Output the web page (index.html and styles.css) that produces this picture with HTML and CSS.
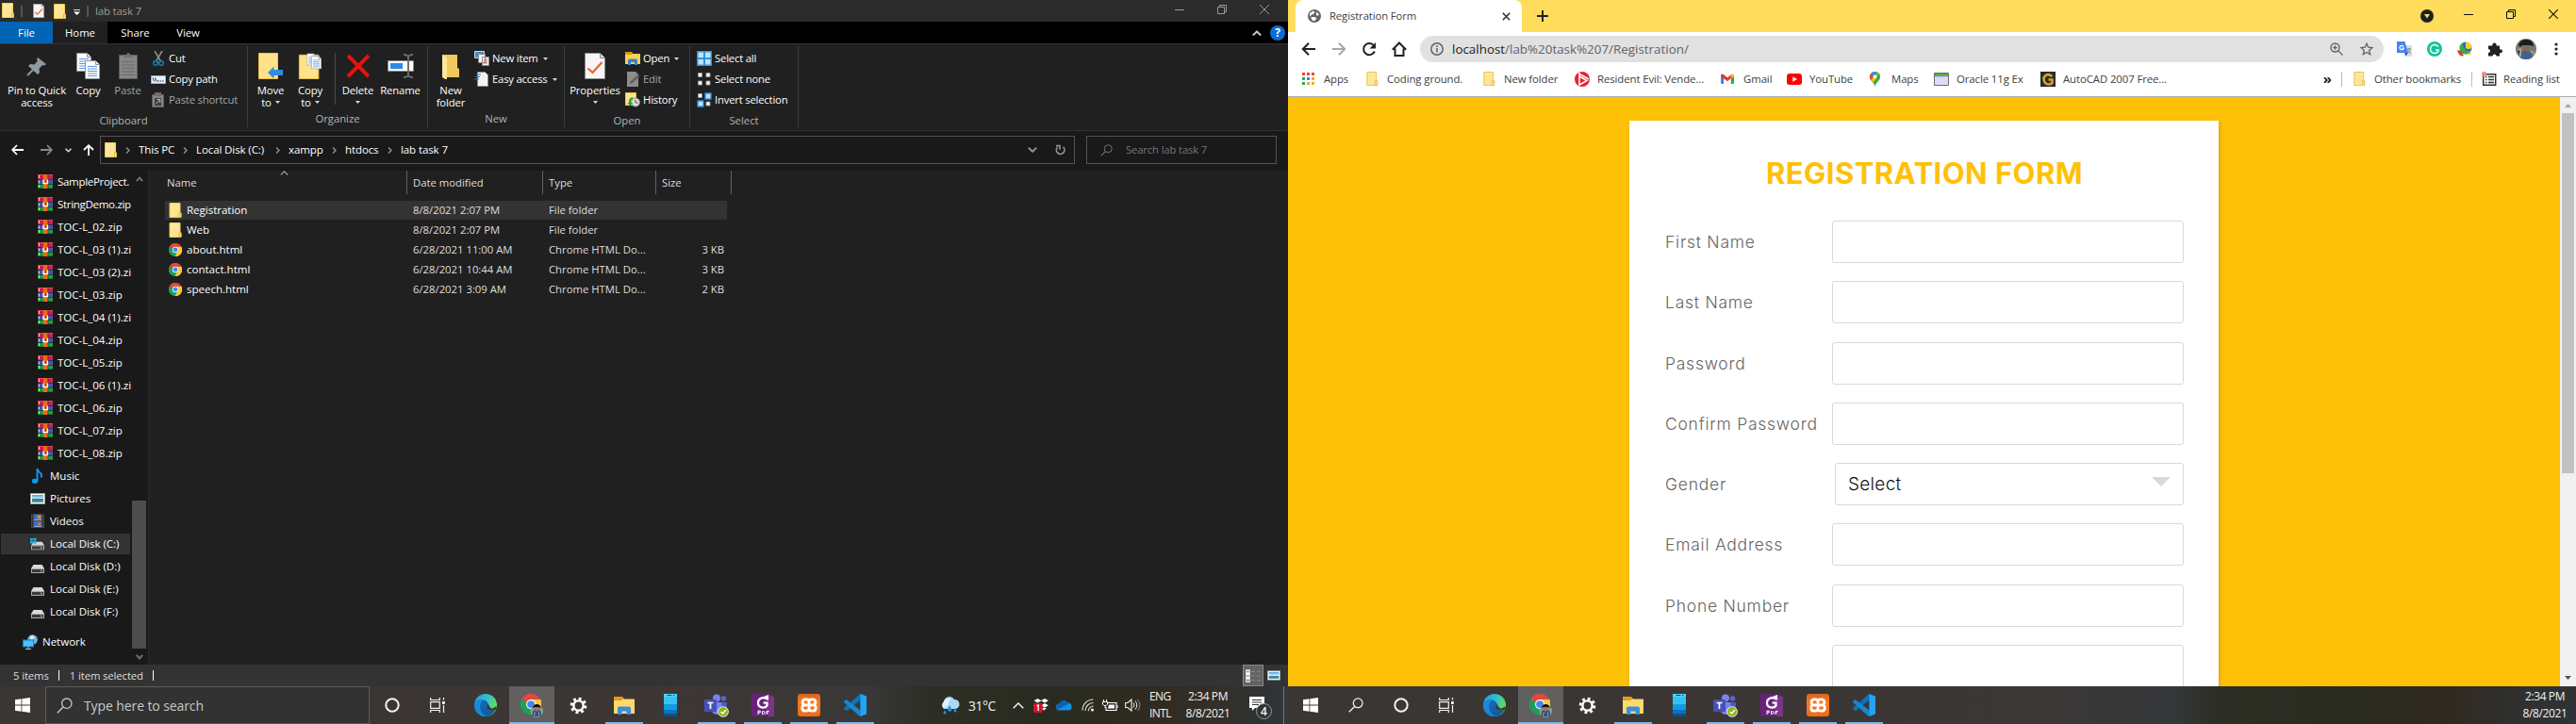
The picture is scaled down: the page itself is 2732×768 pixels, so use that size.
FILE: index.html
```
<!DOCTYPE html>
<html lang="en">
<head>
<meta charset="utf-8">
<title>Desktop</title>
<link rel="stylesheet" href="styles.css">
</head>
<body>
<svg class="defs" width="0" height="0" aria-hidden="true">
  <defs>
    <linearGradient id="gEdge" x1="0" y1="0" x2="1" y2="0.3"><stop offset="0" stop-color="#1b9de2"/><stop offset="0.6" stop-color="#35c1c9"/><stop offset="1" stop-color="#5fdc5a"/></linearGradient>
    <linearGradient id="gEdge2" x1="0" y1="0" x2="0.7" y2="1"><stop offset="0" stop-color="#1470c4"/><stop offset="1" stop-color="#0c59a4"/></linearGradient>
    <linearGradient id="gFold" x1="0" y1="0" x2="1" y2="1"><stop offset="0" stop-color="#ffe9a2"/><stop offset="1" stop-color="#ffe085"/></linearGradient>
    <linearGradient id="gSky" x1="0" y1="0" x2="0" y2="1"><stop offset="0" stop-color="#3f9be8"/><stop offset="0.5" stop-color="#d5ecf7"/><stop offset="0.55" stop-color="#3c7a6a"/><stop offset="1" stop-color="#4f9fc4"/></linearGradient>
    <linearGradient id="gOrange" x1="0" y1="0" x2="0" y2="1"><stop offset="0" stop-color="#d8651f"/><stop offset="0.4" stop-color="#ff7a22"/><stop offset="1" stop-color="#ef6a17"/></linearGradient>
  </defs>
  <symbol id="folder" viewBox="0 0 13 16"><path d="M0.5 0.5h11v10.5h1v4.5h-12z" fill="url(#gFold)" stroke="#f1cb5a"/><path d="M10.5 15.5v-4.5l2 0v4.5z" fill="#ffe591" stroke="#e3b93e"/></symbol>
  <symbol id="zip" viewBox="0 0 16 15"><rect width="16" height="5" fill="#c9224b"/><rect width="16" height="1" fill="#e2476c"/><rect y="5" width="16" height="5" fill="#4b52b4"/><rect y="5" width="16" height="1" fill="#2b2c66"/><rect y="10" width="16" height="5" fill="#20a040"/><rect y="10" width="16" height="1" fill="#124f22"/><rect y="14" width="16" height="1" fill="#13772c"/><path d="M1.5 1v3M1.5 6.500v3M1.500 11v3" stroke="#f7e04a"/><rect x="6" width="4.500" height="15" fill="#ea6a1c"/><rect x="10.500" width="1" height="15" fill="#222" opacity=".5"/><path d="M6 5.500v4h4.500v-4" fill="none" stroke="#fff" stroke-width="1.300"/><path d="M8.200 6v3" stroke="#8b3a10"/></symbol>
  <symbol id="chrome" viewBox="0 0 48 48"><path d="M24 24 3.200 12A24 24 0 0 1 44.800 12z" fill="#dd4a3e"/><path d="M24 24 44.800 12A24 24 0 0 1 24 48z" fill="#fdc83b"/><path d="M24 24 24 48A24 24 0 0 1 3.200 12z" fill="#1c9f5c"/><path d="M24 13h22a24 24 0 0 1-22 35l9.500-18z" fill="#fdc83b"/><path d="M3.200 12 14.500 30 24 35 32 31 22 48A24 24 0 0 1 3.200 12z" fill="#1c9f5c"/><path d="M3.200 12A24 24 0 0 1 45 13H24L14 20z" fill="#dd4a3e"/><circle cx="24" cy="24" r="11" fill="#fff"/><circle cx="24" cy="24" r="8.500" fill="#4688f1"/></symbol>
  <symbol id="caret" viewBox="0 0 5 3"><path d="M0 0h5L2.500 3z" fill="#d8d8d8"/></symbol>
  <symbol id="picture" viewBox="0 0 16 12"><rect width="16" height="12" fill="#9a9a9a"/><rect x="1" y="1" width="14" height="10" fill="#fff"/><rect x="2" y="2" width="12" height="8" fill="url(#gSky)"/></symbol>
  <symbol id="drive" viewBox="0 0 14 9"><path d="M2.500 0h9L14 4H0z" fill="#d9d9dc"/><rect y="4" width="14" height="5" fill="#a9a9ac"/><rect x="1" y="5" width="12" height="3" fill="#3a3a3a"/><circle cx="10.800" cy="6.500" r=".9" fill="#43e04b"/></symbol>
  <symbol id="doc" viewBox="0 0 16 20"><path d="M.5.500h11l4 4v15H.500z" fill="#fbfcff" stroke="#8f9398"/><path d="M11.500.500v4h4" fill="#e6e6ea" stroke="#8f9398"/><path d="M3 6.500h10M3 9h10M3 11.500h10M3 14h10M3 16.500h10" stroke="#5e97dc"/></symbol>
  <symbol id="checkdoc" viewBox="0 0 22 28"><path d="M.5.500h16l5 5v22H.500z" fill="#f6f6f8" stroke="#8b8b8b"/><path d="M16.500.500v5h5" fill="#ddd" stroke="#8b8b8b"/><path d="M3.500 16.500l5 4.500 10-11" fill="none" stroke="#f0621e" stroke-width="2.300"/></symbol>
  <symbol id="win" viewBox="0 0 16 16"><path d="M0 2.300 6.500 1.300V7.600H0zM7.300 1.200 16 0V7.600H7.300zM0 8.400H6.500V14.700L0 13.700zM7.300 8.400H16V16L7.300 14.800z" fill="#fff"/></symbol>
  <symbol id="lens" viewBox="0 0 17 17"><circle cx="10.800" cy="6.200" r="5.200" fill="none" stroke="currentColor" stroke-width="1.300"/><path d="M7 10 .800 16.200" stroke="currentColor" stroke-width="1.400"/></symbol>
  <symbol id="ring" viewBox="0 0 16 16"><circle cx="8" cy="8" r="6.700" fill="none" stroke="#f3f3f3" stroke-width="2"/></symbol>
  <symbol id="taskview" viewBox="0 0 16 16"><path d="M.7 0v2.500h9.600V0M.7 16v-2.500h9.600V16M.7 4.700h9.600v6.600H.7z" fill="none" stroke="#f0f0f0" stroke-width="1.200"/><path d="M14.500 0v2.500M14.500 8v8" stroke="#f0f0f0" stroke-width="1.200"/><rect x="13" y="4" width="2.800" height="3" fill="#f0f0f0"/></symbol>
  <symbol id="edge" viewBox="0 0 24 24"><circle cx="12" cy="12" r="12" fill="url(#gEdge)"/><path d="M.3 10C3 5.500 10.500 5 13.500 8.500c1.500 2 .5 3.500-.2 4.800-.8 1.700.5 4 4 4.400 2.500.200 4.300-.4 5.200-.9C20.500 21.500 16 24 12 24 5 24-.5 17.500.3 10z" fill="url(#gEdge2)"/><path d="M.3 10C2 6 6 5.300 9.300 7.200 6 9.500 5.500 13 6.500 16.500S10 23 13.500 23.900C5 24.800-.6 17.500.3 10z" fill="#1b8ad3"/><path d="M13.500 8.500c1.500 2 .5 3.500-.2 4.800-.8 1.700.5 4 4 4.400 2.500.200 4.300-.4 5.200-.9L24 16l-1-3c-2 3-6 3-6.500 1z" fill="#3b3735"/></symbol>
  <symbol id="chromeUser" viewBox="0 0 26 26"><svg width="23" height="23"><use href="#chrome"/></svg><circle cx="18" cy="19" r="7" fill="#8f9b8d"/><path d="M13 25c0-6 1.500-8 5-8s5 2 5 8z" fill="#34507e"/><circle cx="18" cy="16.500" r="2.800" fill="#9f7462"/><path d="M13.500 16c0-6 9-6 9 0l-2-1.500h-5z" fill="#101015"/><path d="M16 20l-1 5M20 20l1 5" stroke="#82aad9"/></symbol>
  <symbol id="gear" viewBox="0 0 20 20"><circle cx="10" cy="10" r="7.500" fill="none" stroke="#fff" stroke-width="3.600" stroke-dasharray="2.950 2.940"/><circle cx="10" cy="10" r="5.400" fill="none" stroke="#fff" stroke-width="2.600"/></symbol>
  <symbol id="explorer" viewBox="0 0 22 19"><path d="M0 0h9l2 2.500v3H0z" fill="#e0a11b"/><path d="M0 2.500h22V18H0z" fill="#ffd96b"/><path d="M0 2h9V4H0z" fill="#dc9b15"/><path d="M4 19v-6.500q0-2 2-2h10q2 0 2 2V19h-4.500v-3.500h-5V19z" fill="#3a8edb"/></symbol>
  <symbol id="phone" viewBox="0 0 14 24"><rect width="14" height="24" rx="1" fill="#35c3f3"/><rect y="11" width="14" height="6" fill="#139bdf"/><rect y="17" width="14" height="4" fill="#0873bb"/><rect y="21" width="14" height="3" fill="#085192"/><rect width="14" height="3" fill="#4ed4f7"/><path d="M3.500 1.500h5M10 1.500h1.500" stroke="#144d67"/></symbol>
  <symbol id="teams" viewBox="0 0 26 25"><circle cx="13" cy="4.500" r="4" fill="#7b83eb"/><circle cx="20.500" cy="5" r="2.800" fill="#5a63c8"/><path d="M8 9h11v8a6 6 0 0 1-11 2z" fill="#7b83eb"/><path d="M18.500 9H24v6q0 5-5.500 5z" fill="#5059c9"/><rect y="6" width="13" height="13" rx="1" fill="#4650b8"/><path d="M3.500 9.500h6M6.500 9.500V16" stroke="#fff" stroke-width="1.700"/><circle cx="20" cy="19" r="5.800" fill="#fff"/><circle cx="20" cy="19" r="5" fill="#84b816"/><path d="M17.500 19l2 2 3.500-4" fill="none" stroke="#fff" stroke-width="1.500"/></symbol>
  <symbol id="foxit" viewBox="0 0 24 24"><rect width="24" height="24" rx="1" fill="#68217a"/><path d="M24 0v24H18L12 8z" fill="#8d3f96" opacity=".6"/><path d="M20 0h4v4z" fill="#3b3735"/><path d="M16.500 5.500C13 2.500 7 4.500 7 9.500c0 5.500 7 6.500 9.500 3V9.500h-4M12 4.500l5-2v4" fill="none" stroke="#fff" stroke-width="2.200"/><path d="M7 22v-4h2.200v2H7M11.500 18.500h1q1.500 0 1.500 1.500t-1.500 1.500h-1zM16 22v-3.500h2.500M16 20h2" fill="none" stroke="#fff" stroke-width="1"/></symbol>
  <symbol id="xampp" viewBox="0 0 24 24"><rect width="24" height="24" rx="3" fill="url(#gOrange)"/><path d="M12 9.500V8.500Q12 5.800 9 5.800H8a3 3 0 0 0-1.200 5.700M6.800 12A3.200 3.200 0 0 0 8 18.200h1q3 0 3-3v-.5M12 8.500q0-2.700 3-2.700h1a3 3 0 0 1 1.200 5.700M17.200 12A3.200 3.200 0 0 1 16 18.200h-1q-3 0-3-3M8.500 12h7" fill="none" stroke="#fff" stroke-width="2.800" stroke-linecap="round"/></symbol>
  <symbol id="vscode" viewBox="0 0 24 24"><path d="M17.500 0L24 2.800V21.200L17.500 24 13 19.500 17.500 17.500V6.500L4.500 17.300 2.500 18 0 16V15z" fill="#0b73b9"/><path d="M17.500 0L24 2.800V21.200L17.500 24z" fill="#22a5f1"/><path d="M2.500 6 0 8v1l17 15 .5-6.500z" fill="#1787cf"/></symbol>
  <symbol id="chev" viewBox="0 0 5 7"><path d="M1 .500l3 3-3 3" fill="none" stroke="#8f8f8f" stroke-width="1.500"/></symbol>
  <symbol id="bmFolder" viewBox="0 0 13 16"><path d="M.5.500h10.500v10h1v5h-11.500z" fill="#ffe699" stroke="#e8c046"/><path d="M9.500 15.500v-5h2.500v5z" fill="#ffe699" stroke="#e8c046"/></symbol>
</svg>

<div class="desktop">
<section class="screen">
  <div class="explorer">
    <header class="titlebar">
      <svg class="t-app" width="13" height="16"><use href="#folder"/></svg>
      <i class="t-bar"></i>
      <svg class="t-check" width="12" height="15"><use href="#checkdoc"/></svg>
      <svg class="t-fold" width="13" height="16"><use href="#folder"/></svg>
      <svg class="t-drop" width="7" height="6" viewBox="0 0 7 6"><path d="M0 .5h7" stroke="#ddd"/><path d="M0 2.500h7L3.500 6z" fill="#fff"/></svg>
      <i class="t-bar"></i>
      <span class="t-name">lab task 7</span>
      <div class="controls">
        <svg width="10" height="10" viewBox="0 0 10 10"><path d="M0 5.500h10" stroke="#999"/></svg>
        <svg width="10" height="10" viewBox="0 0 10 10"><path d="M.5 2.500h7v7h-7zM2.500 2.500v-2h7v7h-2" fill="none" stroke="#999"/></svg>
        <svg width="10" height="10" viewBox="0 0 10 10"><path d="M0 0l10 10M10 0L0 10" stroke="#999"/></svg>
      </div>
    </header>
    <nav class="tabs">
      <span class="tab file">File</span><span class="tab home">Home</span><span class="tab share">Share</span><span class="tab view">View</span>
      <svg class="collapse" width="10" height="6" viewBox="0 0 10 6"><path d="M.8 5.500L5 1.500l4.200 4" fill="none" stroke="#c3c3c3" stroke-width="2"/></svg>
      <span class="help">?</span>
    </nav>
    <div class="ribbon">
      <div class="group g-clip">
        <div class="cmds">
          <div class="big w-pin"><svg width="24" height="28" viewBox="0 0 24 28"><path d="M2 24l8-8" stroke="#8f9aa1" stroke-width="2"/><path d="M13 5l9 7-2 1.500-2-.5-3.500 4 .5 4-2 2L3 14l2-2 4.500.500 3.500-4L12 7z" fill="#8f9aa1"/></svg><span>Pin to Quick</span><span>access</span></div>
          <div class="big w-copy"><svg width="25" height="28" viewBox="0 0 25 28"><svg width="16" height="20"><use href="#doc"/></svg><svg x="9" y="8" width="16" height="20"><use href="#doc"/></svg></svg><span>Copy</span></div>
          <div class="big w-paste dim"><svg width="20" height="28" viewBox="0 0 20 28"><path d="M.5 2.500h19v25H.500z" fill="#868686" stroke="#5c5c5c"/><path d="M5 5V2h3.500V.300h3V2H15v3z" fill="#707070"/><path d="M3 9.500h14M3 13h14M3 16.500h14M3 20h14M3 23.500h14" stroke="#6b6b6b"/></svg><span>Paste</span></div>
          <div class="small">
            <div class="row"><svg width="16" height="16" viewBox="0 0 16 16"><path d="M4 0l6.500 11M12 0L5.500 11" stroke="#8b9299" stroke-width="1.500"/><circle cx="5" cy="13" r="2.300" fill="none" stroke="#1779b8" stroke-width="1.600"/><circle cx="11" cy="13" r="2.300" fill="none" stroke="#1779b8" stroke-width="1.600"/></svg><span>Cut</span></div>
            <div class="row"><svg width="16" height="16" viewBox="0 0 16 16"><path d="M.5 4.500h15v8H.500z" fill="#e6f1fb" stroke="#8fb6d8"/><path d="M2 6.500l1.700 4M4.500 6.500l1.700 4" stroke="#234"/><path d="M7 10h7" stroke="#234" stroke-dasharray="1.500 1"/></svg><span>Copy path</span></div>
            <div class="row dim"><svg width="16" height="16" viewBox="0 0 16 16"><path d="M1.500 2.500h12v13h-12z" fill="#868686" stroke="#5c5c5c"/><rect x="4" width="7" height="4" fill="#6e6e6e"/><path d="M4 6h7v8H4z" fill="#3f3f3f"/><path d="M5.500 12l4-4M6.500 7.500h3.300v3.300" fill="none" stroke="#bbb"/></svg><span>Paste shortcut</span></div>
          </div>
        </div>
        <div class="gname">Clipboard</div>
      </div>
      <div class="group g-org">
        <div class="cmds">
          <div class="big w-move"><svg width="26" height="28" viewBox="0 0 26 28"><path d="M.5.500h20v27H.500z" fill="#ffe18a" stroke="#ecc247"/><path d="M10 21l6.500-6.500V18H26v6h-9.500v3.500z" fill="#2f8de0"/></svg><span>Move</span><span>to <svg width="5" height="3"><use href="#caret"/></svg></span></div>
          <div class="big w-cpto"><svg width="26" height="30" viewBox="0 0 26 30"><path d="M.5 2.500h22v27H.500z" fill="#ffe18a" stroke="#ecc247"/><svg x="9" width="11" height="15"><use href="#doc"/></svg><svg x="14" y="3" width="12" height="16"><use href="#doc"/></svg></svg><span>Copy</span><span>to <svg width="5" height="3"><use href="#caret"/></svg></span></div>
          <i class="cdiv"></i>
          <div class="big w-del"><svg width="24" height="28" viewBox="0 0 24 28"><path d="M1 3l22 22M23 3L1 25" stroke="#e8130c" stroke-width="4"/></svg><span>Delete</span><span><svg width="5" height="3"><use href="#caret"/></svg></span></div>
          <div class="big w-ren"><svg width="28" height="28" viewBox="0 0 28 28"><path d="M.5 8.500h27v11H.500z" fill="#fff" stroke="#888"/><rect x="3" y="11" width="13" height="6" fill="#2b8be6"/><path d="M17 2q5 0 5 3v18q0 3-5 3M27 2q-5 0-5 3M27 26q-5 0-5-3" fill="none" stroke="#6a6a6a" stroke-width="1.900"/></svg><span>Rename</span></div>
        </div>
        <div class="gname">Organize</div>
      </div>
      <div class="group g-new">
        <div class="cmds">
          <div class="big w-nf"><svg width="20" height="28" viewBox="0 0 20 28"><path d="M1 2h16v14l2 1v9H1z" fill="#f3c95e"/><path d="M1 2l5 3v24l-5-3z" fill="#ffe69a"/></svg><span>New</span><span>folder</span></div>
          <div class="small">
            <div class="row"><svg width="16" height="16" viewBox="0 0 16 16"><path d="M.5.500h10v7H.500z" fill="#3f8fc4" stroke="#c8dbe8"/><path d="M4.500 3.500h7v9h-7zM8.500 6.500h7v9h-7z" fill="#f4f4f4" stroke="#8a8a8a"/><path d="M10 9h4M10 11h4M10 13h4" stroke="#c66"/></svg><span>New item</span><svg width="5" height="3"><use href="#caret"/></svg></div>
            <div class="row"><svg width="16" height="16" viewBox="0 0 16 16"><path d="M3.500.500h8l3 3v12h-11z" fill="#f2f2f2" stroke="#8a8a8a"/><path d="M2 3h5M1 5.500h5M0 8h5" stroke="#2c6fb0"/></svg><span>Easy access</span><svg width="5" height="3"><use href="#caret"/></svg></div>
          </div>
        </div>
        <div class="gname">New</div>
      </div>
      <div class="group g-open">
        <div class="cmds">
          <div class="big w-prop"><svg width="22" height="28"><use href="#checkdoc"/></svg><span>Properties</span><span><svg width="5" height="3"><use href="#caret"/></svg></span></div>
          <div class="small">
            <div class="row"><svg width="16" height="16" viewBox="0 0 16 16"><path d="M0 1h7l1 2h8v11H0z" fill="#ffcf56"/><path d="M0 1h7v3H0z" fill="#d99409"/><path d="M3 15V10q0-1.500 1.500-1.500h7Q13 8.500 13 10v5h-3v-3H6v3z" fill="#2f86d8"/></svg><span>Open</span><svg width="5" height="3"><use href="#caret"/></svg></div>
            <div class="row dim"><svg width="16" height="16" viewBox="0 0 16 16"><path d="M2 0h9l3 3v13H2z" fill="#8c8c8c"/><path d="M5 13l1-3 8-7 1.500 2-8 7z" fill="#5e5e5e"/></svg><span>Edit</span></div>
            <div class="row"><svg width="16" height="16" viewBox="0 0 16 16"><path d="M.5.500h11v13H.500z" fill="#ffe18a" stroke="#ecc247"/><circle cx="11" cy="10.500" r="4.500" fill="#ddd" stroke="#888"/><path d="M11 8v3h2.500" fill="none" stroke="#555"/><path d="M8 6q-4 1-3 6" fill="none" stroke="#19a82f" stroke-width="2"/><path d="M2.500 11h5.500l-2.500 3.500z" fill="#19a82f"/></svg><span>History</span></div>
          </div>
        </div>
        <div class="gname">Open</div>
      </div>
      <div class="group g-sel">
        <div class="cmds">
          <div class="small">
            <div class="row"><svg width="16" height="16" viewBox="0 0 16 16"><rect width="16" height="16" fill="#2f93e0"/><path d="M1.500 1.500h5.500v5.500H1.500zM9 1.500h5.500v5.500H9zM1.500 9h5.500v5.500H1.500zM9 9h5.500v5.500H9z" fill="#bfe3fa"/></svg><span>Select all</span></div>
            <div class="row"><svg width="16" height="16" viewBox="0 0 16 16"><path d="M1.500 1.500h4v4h-4zM10 1.500h4v4h-4zM1.500 10h4v4h-4zM10 10h4v4h-4z" fill="#fff" stroke="#999"/></svg><span>Select none</span></div>
            <div class="row"><svg width="16" height="16" viewBox="0 0 16 16"><path d="M1.500 1.500h4v4h-4zM10 10h4v4h-4z" fill="#fff" stroke="#999"/><path d="M9 1h6v6H9zM1 9h6v6H1z" fill="#bfe3fa" stroke="#2f93e0" stroke-width="1.300"/></svg><span>Invert selection</span></div>
          </div>
        </div>
        <div class="gname">Select</div>
      </div>
    </div>

    <div class="address">
      <div class="arrows">
        <svg width="13" height="12" viewBox="0 0 13 12"><path d="M13 6H1.500M6 1L1.200 6 6 11" fill="none" stroke="#fff" stroke-width="1.800"/></svg>
        <svg width="13" height="12" viewBox="0 0 13 12"><path d="M0 6h11.500M7 1l4.800 5L7 11" fill="none" stroke="#8a8a8a" stroke-width="1.800"/></svg>
        <svg width="7" height="5" viewBox="0 0 7 5"><path d="M.5.700l3 3 3-3" fill="none" stroke="#ddd" stroke-width="1.600"/></svg>
        <svg width="12" height="12" viewBox="0 0 12 12"><path d="M6 12V1.500M1 6l5-4.800L11 6" fill="none" stroke="#fff" stroke-width="1.800"/></svg>
      </div>
      <div class="path">
        <svg width="13" height="16"><use href="#folder"/></svg>
        <svg class="ch c0" width="5" height="7"><use href="#chev"/></svg><span class="p1">This PC</span>
        <svg class="ch" width="5" height="7"><use href="#chev"/></svg><span class="p2">Local Disk (C:)</span>
        <svg class="ch" width="5" height="7"><use href="#chev"/></svg><span class="p3">xampp</span>
        <svg class="ch" width="5" height="7"><use href="#chev"/></svg><span class="p4">htdocs</span>
        <svg class="ch" width="5" height="7"><use href="#chev"/></svg><span>lab task 7</span>
        <svg class="pdrop" width="10" height="6" viewBox="0 0 10 6"><path d="M.8.800L5 4.800 9.200.800" fill="none" stroke="#909090" stroke-width="2"/></svg>
        <svg class="refresh" width="11" height="12" viewBox="0 0 11 12"><path d="M8.500 2.800A4.300 4.300 0 1 1 2.400 3.200M1 1.700h4v4" fill="none" stroke="#909090" stroke-width="1.700"/></svg>
      </div>
      <div class="search"><svg width="13" height="13"><use href="#lens"/></svg><span>Search lab task 7</span></div>
    </div>

    <div class="main">
      <aside class="tree">
        <ul>
          <li class="zip tight"><svg width="16" height="15"><use href="#zip"/></svg>SampleProject.</li>
          <li class="zip tight"><svg width="16" height="15"><use href="#zip"/></svg>StringDemo.zip</li>
          <li class="zip"><svg width="16" height="15"><use href="#zip"/></svg>TOC-L_02.zip</li>
          <li class="zip"><svg width="16" height="15"><use href="#zip"/></svg>TOC-L_03 (1).zi</li>
          <li class="zip"><svg width="16" height="15"><use href="#zip"/></svg>TOC-L_03 (2).zi</li>
          <li class="zip"><svg width="16" height="15"><use href="#zip"/></svg>TOC-L_03.zip</li>
          <li class="zip"><svg width="16" height="15"><use href="#zip"/></svg>TOC-L_04 (1).zi</li>
          <li class="zip"><svg width="16" height="15"><use href="#zip"/></svg>TOC-L_04.zip</li>
          <li class="zip"><svg width="16" height="15"><use href="#zip"/></svg>TOC-L_05.zip</li>
          <li class="zip"><svg width="16" height="15"><use href="#zip"/></svg>TOC-L_06 (1).zi</li>
          <li class="zip"><svg width="16" height="15"><use href="#zip"/></svg>TOC-L_06.zip</li>
          <li class="zip"><svg width="16" height="15"><use href="#zip"/></svg>TOC-L_07.zip</li>
          <li class="zip"><svg width="16" height="15"><use href="#zip"/></svg>TOC-L_08.zip</li>
          <li><svg width="16" height="16" viewBox="0 0 16 16"><path d="M7.500 0v13M7.500 0q.5 3 3 4.500t1 5" fill="none" stroke="#0b96f5" stroke-width="2"/><ellipse cx="5" cy="13.300" rx="3.200" ry="2.600" fill="#0b96f5"/></svg>Music</li>
          <li><svg width="16" height="12"><use href="#picture"/></svg>Pictures</li>
          <li><svg width="16" height="15" viewBox="0 0 16 15"><rect x="1" width="14" height="15" fill="#4b4b4b"/><path d="M2.500 0v15M13.500 0v15" stroke="#1b1b1b" stroke-dasharray="1 1.500" stroke-width="1.200"/><rect x="4" y="1" width="8" height="6" fill="#3b6fc9"/><rect x="4" y="8" width="8" height="6" fill="#3b6fc9"/><circle cx="9.500" cy="3.500" r="2" fill="#d39c23"/><circle cx="9.500" cy="11" r="1.800" fill="#d8702b"/><path d="M4 6.500h8M4 13.500h8" stroke="#92a8d8"/></svg>Videos</li>
          <li class="current"><svg width="16" height="14" viewBox="0 0 16 14"><svg x="1" y="4.500" width="14" height="9"><use href="#drive"/></svg><path d="M0 1h2.800v2.500H0zM3.400.700h3v2.800h-3zM0 4h2.800v2.500H0zM3.400 4h3v2.800h-3z" fill="#19b2f0"/></svg>Local Disk (C:)</li>
          <li><svg width="16" height="14" viewBox="0 0 16 14"><svg x="1" y="5" width="14" height="9"><use href="#drive"/></svg></svg>Local Disk (D:)</li>
          <li><svg width="16" height="14" viewBox="0 0 16 14"><svg x="1" y="5" width="14" height="9"><use href="#drive"/></svg></svg>Local Disk (E:)</li>
          <li><svg width="16" height="14" viewBox="0 0 16 14"><svg x="1" y="5" width="14" height="9"><use href="#drive"/></svg></svg>Local Disk (F:)</li>
          <li class="net"><svg width="16" height="16" viewBox="0 0 16 16"><circle cx="10.500" cy="5.500" r="5.300" fill="#6fb4d6"/><path d="M8 2q3-2 5 1-2 3-5 2z" fill="#d8eef5"/><path d="M0 5.500h12v8H0z" fill="#1380c9"/><path d="M1 6.500h10v6H1z" fill="#54bdf6"/><path d="M3 15.500h6M6 13v3" stroke="#b5c6d0"/></svg>Network</li>
        </ul>
        <div class="vbar">
          <svg width="8" height="6" viewBox="0 0 8 6"><path d="M.8 5.200L4 1.500l3.200 3.700" fill="none" stroke="#6f6f6f" stroke-width="2"/></svg>
          <i></i>
          <svg width="8" height="6" viewBox="0 0 8 6"><path d="M.8.800L4 4.500 7.200.800" fill="none" stroke="#6f6f6f" stroke-width="2"/></svg>
        </div>
      </aside>
      <div class="files">
        <svg class="sort" width="9" height="5" viewBox="0 0 9 5"><path d="M.8 4.500l3.700-3.700 3.700 3.700" fill="none" stroke="#999" stroke-width="1.200"/></svg>
        <div class="cols"><span>Name</span><span>Date modified</span><span>Type</span><span>Size</span></div>
        <div class="frow sel"><svg width="13" height="16"><use href="#folder"/></svg><b>Registration</b><span>8/8/2021 2:07 PM</span><span>File folder</span><em></em></div>
        <div class="frow"><svg width="13" height="16"><use href="#folder"/></svg><b>Web</b><span>8/8/2021 2:07 PM</span><span>File folder</span><em></em></div>
        <div class="frow"><svg width="14" height="14"><use href="#chrome"/></svg><b>about.html</b><span>6/28/2021 11:00 AM</span><span>Chrome HTML Do...</span><em>3 KB</em></div>
        <div class="frow"><svg width="14" height="14"><use href="#chrome"/></svg><b>contact.html</b><span>6/28/2021 10:44 AM</span><span>Chrome HTML Do...</span><em>3 KB</em></div>
        <div class="frow"><svg width="14" height="14"><use href="#chrome"/></svg><b>speech.html</b><span>6/28/2021 3:09 AM</span><span>Chrome HTML Do...</span><em>2 KB</em></div>
      </div>
    </div>
    <footer class="status">
      <span>5 items</span><i></i><span>1 item selected</span><i></i>
      <div class="views">
        <div class="v-on"><svg width="16" height="14" viewBox="0 0 16 14"><path d="M.5.500h4v13h-4z" fill="#fff" stroke="#ccc"/><path d="M1.500 2.500h2M1.500 7h2M1.500 11.500h2" stroke="#38a" stroke-width="1.300"/><path d="M1.500 11.500h2" stroke="#c33" stroke-width="1.300"/><path d="M6 2.500h4M12 2.500h4M6 7h4M12 7h4M6 11.500h4M12 11.500h4" stroke="#868686"/></svg></div>
        <svg width="14" height="11"><use href="#picture"/></svg>
      </div>
    </footer>
  </div>
  <div class="taskbar left">
    <div class="tk"><svg width="16" height="16"><use href="#win"/></svg></div>
    <div class="tsearch"><svg width="17" height="17"><use href="#lens"/></svg><span>Type here to search</span></div>
    <div class="tk"><svg width="16" height="16"><use href="#ring"/></svg></div>
    <div class="tk"><svg width="16" height="16"><use href="#taskview"/></svg></div>
    <div class="apps">
      <div class="tk"><svg width="24" height="24"><use href="#edge"/></svg></div>
      <div class="tk act"><svg width="25" height="25"><use href="#chromeUser"/></svg></div>
      <div class="tk"><svg width="19" height="19"><use href="#gear"/></svg></div>
      <div class="tk run"><svg width="22" height="19"><use href="#explorer"/></svg></div>
      <div class="tk"><svg width="14" height="24"><use href="#phone"/></svg></div>
      <div class="tk run"><svg width="26" height="25"><use href="#teams"/></svg></div>
      <div class="tk run"><svg width="24" height="24"><use href="#foxit"/></svg></div>
      <div class="tk run"><svg width="24" height="24"><use href="#xampp"/></svg></div>
      <div class="tk run"><svg width="24" height="24"><use href="#vscode"/></svg></div>
    </div>
    <div class="tray">
      <svg width="22" height="20" viewBox="0 0 22 20"><path d="M5 14a5 5 0 0 1 0-8 6 6 0 0 1 11-2 5 5 0 0 1 1 10z" fill="#a9d9f5"/><path d="M5 13a4 4 0 0 1 0-6 5 5 0 0 1 8-3q-4 1-3 6z" fill="#e2f3fc"/><path d="M11 10l2.500 4.500a2 2 0 1 1-4.500 0zM6 15l1.500 3a1.500 1.500 0 1 1-3 0zM17 13l1.500 3a1.500 1.500 0 1 1-3 0z" fill="#2b8ce6"/></svg>
      <span class="temp">31°C</span>
      <svg class="i-up" width="12" height="7" viewBox="0 0 12 7"><path d="M.7 6.300L6 1l5.300 5.300" fill="none" stroke="#fff" stroke-width="1.300"/></svg>
      <svg class="i-db" width="16" height="16" viewBox="0 0 16 16"><path d="M4.500 1l4 2.300-4 2.300-4-2.300zM12 1l4 2.300-4 2.300-4-2.300zM12 6l4 2.300-4 2.300-4-2.300zM9 12l2-1.500 3 1-3 2z" fill="#fff"/><rect y="6" width="9.500" height="10" rx="1" fill="#d8102f"/><path d="M3.500 9l1.700-1v6" fill="none" stroke="#fff" stroke-width="1.300"/></svg>
      <svg class="i-od" width="17" height="12" viewBox="0 0 17 12"><path d="M3.500 11.500a3.500 3.500 0 0 1 0-7A5 5 0 0 1 12 3q4.500.5 4.700 5 0 3.500-3.500 3.500z" fill="#1490df"/><path d="M3.500 4.500A5 5 0 0 1 12 3q1.500.3 2.500 1.200L6 8.500 1 11Q-1.500 6 3.500 4.500z" fill="#0a63b8"/></svg>
      <svg class="i-wifi" width="14" height="14" viewBox="0 0 14 14"><path d="M1 12.500A11.500 11.500 0 0 1 12.500 1M4 13a8.500 8.500 0 0 1 8.500-8.500M7.200 13.300a5.500 5.500 0 0 1 5.500-5.300" fill="none" stroke="#ddd" stroke-width="1.100"/><circle cx="11.500" cy="12" r="1.500" fill="#fff"/></svg>
      <svg class="i-bat" width="17" height="13" viewBox="0 0 17 13"><path d="M5.500 3.500h9.500v8H4V8" fill="none" stroke="#fff" stroke-width="1.100"/><path d="M7 5.500h6v4H6z" fill="#fff"/><path d="M16 6v3M1.500 0v2.500M4.500 0v2.500M3 6v3" stroke="#fff"/><path d="M.5 2.500h5V5L4 6.500H2L.5 5z" fill="none" stroke="#fff"/></svg>
      <svg class="i-vol" width="17" height="14" viewBox="0 0 17 14"><path d="M.6 4.500H3L7 1v12L3 9.500H.6z" fill="none" stroke="#eee" stroke-width="1.100"/><path d="M9 4.500q2 2.500 0 5M11 2.500q3.500 4.500 0 9" fill="none" stroke="#eee"/><path d="M13.500 1q5 6 0 12" fill="none" stroke="#888"/></svg>
      <div class="two lang"><span>ENG</span><span>INTL</span></div>
      <div class="two clock"><span>2:34 PM</span><span>8/8/2021</span></div>
      <div class="note"><svg width="16" height="15" viewBox="0 0 16 15"><path d="M0 0h16v12H6l-3 3v-3H0z" fill="#fff"/><path d="M3 3.500h10M3 6h10M3 8.500h7" stroke="#333"/></svg><span>4</span></div>
      <i class="peek"></i>
    </div>
  </div>
</section>

<section class="screen">
  <div class="browser">
    <div class="tabstrip">
      <div class="btab">
        <svg width="14" height="14" viewBox="0 0 14 14"><circle cx="7" cy="7" r="7" fill="#5f6368"/><path d="M2 4q2-2 4-2.500L7.500 3 6 5l-2 .5L2 8zM9 2.500l3 2.500-1 1.500H9zM3.500 8h4l2 1.500L7 12.500 4 11z" fill="#fff"/></svg>
        <span>Registration Form</span>
        <svg width="9" height="9" viewBox="0 0 9 9"><path d="M.8.800l7.400 7.400M8.200.800L.8 8.200" stroke="#333" stroke-width="1.600"/></svg>
      </div>
      <svg class="plus" width="12" height="12" viewBox="0 0 12 12"><path d="M6 0v12M0 6h12" stroke="#222" stroke-width="2"/></svg>
      <div class="bctl">
        <svg width="14" height="14" viewBox="0 0 14 14"><circle cx="7" cy="7" r="7" fill="#1f2022"/><path d="M4 5h6l-3 4.500z" fill="#ffdc5c"/></svg>
        <svg width="10" height="10" viewBox="0 0 10 10"><path d="M0 5.500h10" stroke="#111"/></svg>
        <svg width="10" height="10" viewBox="0 0 10 10"><path d="M.5 2.500h7v7h-7zM2.500 2.500v-2h7v7h-2" fill="none" stroke="#111"/></svg>
        <svg width="10" height="10" viewBox="0 0 10 10"><path d="M0 0l10 10M10 0L0 10" stroke="#111" stroke-width="1.100"/></svg>
      </div>
    </div>
    <div class="toolbar">
      <svg width="16" height="16" viewBox="0 0 16 16"><path d="M15 8H2.500M8 1.800L1.800 8 8 14.200" fill="none" stroke="#202124" stroke-width="2"/></svg>
      <svg width="16" height="16" viewBox="0 0 16 16"><path d="M1 8h12.500M8 1.800L14.200 8 8 14.200" fill="none" stroke="#a6a6a6" stroke-width="2"/></svg>
      <svg width="16" height="16" viewBox="0 0 16 16"><path d="M13.800 10.500A6.100 6.100 0 1 1 12.500 3.700" fill="none" stroke="#202124" stroke-width="2"/><path d="M15 1v6.500H8.500z" fill="#202124"/></svg>
      <svg width="16" height="16" viewBox="0 0 16 16"><path d="M3.500 7.500V15h9V7.500M.8 8.800L8 1.500l7.200 7.300" fill="none" stroke="#202124" stroke-width="2"/></svg>
      <div class="omni">
        <svg width="14" height="14" viewBox="0 0 14 14"><circle cx="7" cy="7" r="6.200" fill="none" stroke="#5f6368" stroke-width="1.500"/><path d="M7 6v4.500M7 3.300v1.600" stroke="#5f6368" stroke-width="1.600"/></svg>
        <p>localhost<span>/lab%20task%207/Registration/</span></p>
        <svg class="o-zoom" width="14" height="14" viewBox="0 0 14 14"><circle cx="5.500" cy="5.500" r="4.500" fill="none" stroke="#5f6368" stroke-width="1.400"/><path d="M9 9l4.500 4.500M5.500 3.300v4.400M3.300 5.500h4.400" stroke="#5f6368" stroke-width="1.300"/></svg>
        <svg width="14" height="14" viewBox="0 0 14 14"><path d="M7 1.200l1.700 4 4.300.4-3.300 2.900 1 4.200L7 10.400l-3.700 2.300 1-4.200L1 5.600l4.300-.4z" fill="none" stroke="#5f6368" stroke-width="1.300"/></svg>
      </div>
      <div class="exts">
        <svg width="16" height="16" viewBox="0 0 16 16"><path d="M6 4h10v12H9z" fill="#dcdcdc"/><path d="M0 0h8.500l3.500 12H0z" fill="#4285f4"/><path d="M7 5.300A2.200 2.200 0 1 0 7.300 7H5.200" fill="none" stroke="#fff" stroke-width="1.200"/><path d="M10.500 8h4.500M12.800 7v1M14 8q-.5 3-3.500 4.500M11.500 9.500q1 2 3.500 3" fill="none" stroke="#7a8a99"/><path d="M8 12h4l-2.500 3.500z" fill="#2a56c6"/></svg>
        <svg width="16" height="16" viewBox="0 0 16 16"><circle cx="8" cy="8" r="8" fill="#15c39a"/><path d="M11.800 5.500A4.500 4.500 0 1 0 12.300 9.500M12.800 9H9" fill="none" stroke="#fff" stroke-width="1.400"/></svg>
        <svg width="16" height="16" viewBox="0 0 16 16"><circle cx="9" cy="7" r="6.500" fill="#2d6fb5"/><path d="M9 .5q6 0 6.500 6.500-4 2-6.500 0z" fill="#f3d131"/><path d="M5 2l4 8h5q-2 4-6 3-6-2-5-8z" fill="#36b13a"/><path d="M0 9l4 1 3 5q-5 2-7-6z" fill="#d44421"/><path d="M10 14l4-3 1 3z" fill="#f3d131"/></svg>
        <svg width="16" height="16" viewBox="0 0 16 16"><path d="M1 4.500h4.500a2.200 2.200 0 1 1 4 0H13v4a2 2 0 1 1 0 3.500v3.500H9.500a2 2 0 1 0-4 0H1V12a2 2 0 1 0 0-4z" fill="#202124"/></svg>
        <svg class="ava" width="22" height="22" viewBox="0 0 22 22"><defs><clipPath id="cpA"><circle cx="11" cy="11" r="11"/></clipPath></defs><g clip-path="url(#cpA)"><rect width="22" height="22" fill="#75776f"/><path d="M5 22q0-10 6-10t7 10z" fill="#3f6390"/><path d="M8 7h6v6H8z" fill="#8c6552"/><path d="M3 7Q5 0 12 1t7 7l-4-1H7L5 9z" fill="#1b1b1e"/><path d="M2 12l3-1v8M16 13l4 3" stroke="#9f9f96" stroke-width="2"/></g></svg>
        <svg width="4" height="14" viewBox="0 0 4 14"><circle cx="2" cy="2" r="1.600" fill="#222"/><circle cx="2" cy="7" r="1.600" fill="#222"/><circle cx="2" cy="12" r="1.600" fill="#222"/></svg>
      </div>
    </div>
    <div class="bookmarks">
      <a class="k-apps"><svg width="13" height="13" viewBox="0 0 13 13"><path d="M0 1.500h13" stroke="#e8453c" stroke-width="3" stroke-dasharray="3 2"/><path d="M0 6.500h3" stroke="#2fa05a" stroke-width="3"/><path d="M5 6.500h3" stroke="#3b82f0" stroke-width="3"/><path d="M10 6.500h3" stroke="#f2ad17" stroke-width="3"/><path d="M0 11.500h3" stroke="#2fa05a" stroke-width="3"/><path d="M5 11.500h8" stroke="#f2ad17" stroke-width="3" stroke-dasharray="3 2"/></svg><span>Apps</span></a>
      <a class="k-cg"><svg width="13" height="15"><use href="#bmFolder"/></svg><span>Coding ground.</span></a>
      <a class="k-nf"><svg width="13" height="15"><use href="#bmFolder"/></svg><span>New folder</span></a>
      <a class="k-re"><svg width="16" height="16" viewBox="0 0 16 16"><circle cx="8" cy="8" r="8" fill="#e9202c"/><path d="M5 1v14M5 5l8 4.500L5 14M5 2.500L15 8" fill="none" stroke="#fff" stroke-width="1.500"/></svg><span>Resident Evil: Vende...</span></a>
      <a class="k-gm"><svg width="14" height="11" viewBox="0 0 14 11"><path d="M0 1.500L3.200 4v7H1q-1 0-1-1z" fill="#4285f4"/><path d="M14 1.500L10.800 4v7H13q1 0 1-1z" fill="#34a853"/><path d="M0 1.500Q1 0 2.500.800L7 4.200v4L0 3z" fill="#e0392e"/><path d="M10.800 1.300V5.300L14 3V1.500Q13 0 11.800.600z" fill="#fbbc04"/><path d="M7 4.200l3.800-2.900v4L7 8.200z" fill="#ea4335"/></svg><span>Gmail</span></a>
      <a class="k-yt"><svg width="16" height="12" viewBox="0 0 16 12"><rect width="16" height="12" rx="3" fill="#f00"/><path d="M6.300 3.300v5.400L11 6z" fill="#fff"/></svg><span>YouTube</span></a>
      <a class="k-mp"><svg width="11" height="16" viewBox="0 0 11 16"><path d="M5.500 0a5.500 5.500 0 0 1 5.500 5.500c0 4-4.500 5.500-5.500 10.500C4.500 11 0 9.500 0 5.500A5.500 5.500 0 0 1 5.500 0z" fill="#34a853"/><path d="M1 2.500A5.500 5.500 0 0 1 7 .200L3 5.500z" fill="#4285f4"/><path d="M1 2.500l3 2.500-3 4Q-1 5 1 2.500z" fill="#ea4335"/><path d="M1 9l8-8q2 1.500 2 4L3 11.500z" fill="#fbbc04"/><path d="M7 .200q3 .5 4 5.300L5 11 9 1.500z" fill="#34a853"/><circle cx="5.500" cy="5.500" r="2" fill="#fff"/></svg><span>Maps</span></a>
      <a class="k-or"><svg width="16" height="14" viewBox="0 0 16 14"><path d="M.5.500h15v13H.500z" fill="#dcdcfa" stroke="#6d6d70"/><path d="M1 2h14" stroke="#4fae3a" stroke-width="2"/><path d="M1 3.800h14" stroke="#777"/></svg><span>Oracle 11g Ex</span></a>
      <a class="k-ac"><svg width="16" height="16" viewBox="0 0 16 16"><rect width="16" height="16" fill="#2a2a2c"/><path d="M12.500 5Q8 1.500 5 4.500T5 12q4 3 7.500 0V8.500H8.500" fill="none" stroke="#d7a125" stroke-width="2.600"/></svg><span>AutoCAD 2007 Free...</span></a>
      <div class="bm-r">
        <b>»</b><i></i>
        <a class="k-ob"><svg width="13" height="15"><use href="#bmFolder"/></svg><span>Other bookmarks</span></a><i></i>
        <a class="k-rl"><svg width="16" height="16" viewBox="0 0 16 16"><path d="M1.700 2.700h13v11.600h-13z" fill="none" stroke="#333" stroke-width="1.500"/><path d="M4 5.500h1.500M4 8.500h1.500M4 11.500h1.500M7 5.500h6M7 8.500h6M7 11.500h6" stroke="#333" stroke-width="1.300"/><circle cx="2.600" cy="2.600" r="2.600" fill="#f28b82"/></svg><span>Reading list</span></a>
      </div>
    </div>
    <div class="view-port">
      <main class="page">
        <form class="card">
          <h1>REGISTRATION FORM</h1>
          <div class="field"><label>First Name</label><input type="text"></div>
          <div class="field"><label>Last Name</label><input type="text"></div>
          <div class="field"><label>Password</label><input type="password"></div>
          <div class="field"><label>Confirm Password</label><input type="password"></div>
          <div class="field"><label>Gender</label><div class="select"><span>Select</span><i></i></div></div>
          <div class="field"><label>Email Address</label><input type="text"></div>
          <div class="field"><label>Phone Number</label><input type="text"></div>
          <div class="field tall"><label></label><input type="text"></div>
        </form>
      </main>
      <div class="scroll">
        <svg width="7" height="4" viewBox="0 0 7 4"><path d="M0 4h7L3.500 0z" fill="#a3a3a3"/></svg>
        <i></i>
        <svg width="7" height="4" viewBox="0 0 7 4"><path d="M0 0h7L3.500 4z" fill="#505050"/></svg>
      </div>
    </div>
  </div>
  <div class="taskbar right">
    <div class="tk"><svg width="16" height="16"><use href="#win"/></svg></div>
    <div class="tk"><svg width="16" height="16"><use href="#lens"/></svg></div>
    <div class="tk"><svg width="16" height="16"><use href="#ring"/></svg></div>
    <div class="tk"><svg width="16" height="16"><use href="#taskview"/></svg></div>
    <div class="apps">
      <div class="tk"><svg width="24" height="24"><use href="#edge"/></svg></div>
      <div class="tk act"><svg width="25" height="25"><use href="#chromeUser"/></svg></div>
      <div class="tk"><svg width="19" height="19"><use href="#gear"/></svg></div>
      <div class="tk run"><svg width="22" height="19"><use href="#explorer"/></svg></div>
      <div class="tk"><svg width="14" height="24"><use href="#phone"/></svg></div>
      <div class="tk run"><svg width="26" height="25"><use href="#teams"/></svg></div>
      <div class="tk run"><svg width="24" height="24"><use href="#foxit"/></svg></div>
      <div class="tk run"><svg width="24" height="24"><use href="#xampp"/></svg></div>
      <div class="tk run"><svg width="24" height="24"><use href="#vscode"/></svg></div>
    </div>
    <div class="two clock solo"><span>2:34 PM</span><span>8/8/2021</span></div>
  </div>
</section>
</div>
</body>
</html>
```

FILE: styles.css
```
* { box-sizing: border-box; }
body { margin: 0; width: 2732px; height: 768px; overflow: hidden; background: #202020; font-family: "Open Sans", "Noto Sans", sans-serif; font-size: 11.3px; color: #fff; white-space: nowrap; }
svg { display: block; flex: none; }
.defs { position: absolute; }
.desktop { display: flex; width: 2732px; height: 768px; }
.screen { width: 1366px; height: 768px; display: flex; flex-direction: column; overflow: hidden; }

/* File Explorer */
.explorer { height: 728px; display: flex; flex-direction: column; background: #202020; }
.titlebar { height: 23px; background: #2b2b2b; display: flex; align-items: center; padding-left: 2px; color: #9c9c9c; font-size: 11.5px; }
.t-app { margin: 0 7px 1px 0; }
.t-bar { width: 2px; height: 12px; background: #545454; }
.t-check { margin: 0 10px 0 11px; }
.t-fold { margin-right: 8px; }
.t-drop { margin-right: 7px; margin-top: 3px; }
.t-name { margin-left: 7px; letter-spacing: -0.2px; }
.controls { margin-left: auto; display: flex; gap: 35px; padding: 0 20px 3px 0; }
.tabs { height: 23px; background: #000; display: flex; align-items: center; }
.tab { height: 23px; line-height: 24px; text-align: center; }
.file { width: 56px; background: #0164b4; }
.home { width: 58px; background: #202020; }
.share { width: 59px; }
.view { width: 53px; }
.collapse { margin-left: auto; margin-right: 9px; }
.help { width: 16px; height: 16px; border-radius: 50%; background: #0a6ed1; font: bold 12px/16px "Open Sans", sans-serif; text-align: center; margin-right: 3px; }
.ribbon { height: 93px; border-top: 1px solid #343434; border-bottom: 1px solid #303030; display: flex; }
.group { display: flex; flex-direction: column; border-right: 1px solid #3c3c3c; margin: 2px 0 3px; height: 86px; }
.g-clip { width: 263px; }
.g-org { width: 191px; }
.g-new { width: 145px; }
.g-open { width: 133px; }
.g-sel { width: 115px; }
.cmds { display: flex; height: 71px; }
.gname { text-align: center; line-height: 19px; padding-top: 1px; color: #b4b4b4; }
.big { display: flex; flex-direction: column; align-items: center; padding-top: 7px; line-height: 13px; letter-spacing: -0.1px; }
.big > svg { height: 28px; margin-bottom: 5px; }
.big span { display: flex; align-items: center; gap: 4px; min-height: 13px; }
.w-pin { width: 78px; }
.w-copy { width: 31px; }
.w-paste { width: 53px; }
.w-move { width: 48px; }
.w-cpto { width: 36px; }
.w-del { width: 47px; }
.w-ren { width: 43px; }
.w-nf { width: 48px; }
.w-prop { width: 64px; }
.cdiv { width: 1px; height: 55px; background: #4a4a4a; margin: 7px 0 0 8px; }
.dim { color: #a4a4a4; }
.small { display: flex; flex-direction: column; padding-top: 2px; letter-spacing: -0.2px; }
.g-clip .small { margin-left: -2px; }
.g-new .small { margin-left: 1px; }
.g-sel .small { margin-left: 7px; }
.row { height: 22px; display: flex; align-items: center; gap: 3px; }
.row > span { padding-bottom: 1px; }
.row > span + svg { margin-left: 2px; }

.address { height: 42px; background: #191919; display: flex; align-items: flex-start; padding-top: 5px; }
.arrows { width: 106px; height: 30px; display: flex; align-items: center; padding-left: 12px; }
.arrows svg:nth-child(2) { margin-left: 18px; }
.arrows svg:nth-child(3) { margin-left: 13px; }
.arrows svg:nth-child(4) { margin-left: 12px; }
.path { width: 1034px; height: 30px; border: 1px solid #535353; display: flex; align-items: center; padding-left: 4px; }
.ch { margin-right: 9px; }
.c0 { margin-left: 9px; }
.path span { font-size: 11.5px; letter-spacing: -0.1px; padding-bottom: 2px; }
.p1 { width: 47px; }
.p2 { width: 84px; }
.p3 { width: 46px; }
.p4 { width: 45px; }
.pdrop { margin-left: auto; margin-right: 19px; }
.refresh { margin-right: 9px; }
.search { width: 202px; height: 30px; border: 1px solid #535353; margin-left: 12px; display: flex; align-items: center; padding-left: 14px; gap: 14px; color: #757575; letter-spacing: -0.15px; }
.search span { padding-bottom: 2px; }

.main { height: 524px; display: flex; }
.tree { width: 158px; background: #191919; display: flex; border-right: 1px solid #2b2b2b; }
.tree ul { width: 139px; margin: 0; padding: 0; list-style: none; overflow: hidden; }
.tree li { height: 24px; line-height: 22px; display: flex; align-items: center; gap: 5px; padding: 0 0 1px 32px; font-size: 11.5px; }
.tree li.zip { padding-left: 40px; }
.tree li.tight { letter-spacing: -0.3px; }
.tree li.current { background: #333; height: 22px; margin: 1px; padding: 0 0 1px 31px; }
.tree li.net { padding-left: 24px; margin-top: 8px; }
.vbar { width: 17px; display: flex; flex-direction: column; align-items: center; padding: 6px 0 5px; }
.vbar i { width: 15px; height: 157px; background: #4d4d4d; margin: auto 0 6px; }
.files { position: relative; width: 1208px; }
.sort { position: absolute; left: 139px; top: 0; }
.cols { display: flex; height: 25px; line-height: 25px; color: #dedede; margin-bottom: 7px; }
.cols span { border-right: 1px solid #636363; padding-left: 6px; }
.cols span:nth-child(1) { width: 274px; padding-left: 19px; }
.cols span:nth-child(2) { width: 144px; }
.cols span:nth-child(3) { width: 120px; }
.cols span:nth-child(4) { width: 80px; }
.frow { height: 20px; width: 596px; margin: 0 0 1px 17px; display: flex; align-items: center; padding-left: 4px; color: #dedede; }
.frow.sel { background: #333; }
.frow > svg { width: 14px; margin-right: 5px; }
.frow b, .frow span, .frow em { padding-bottom: 2px; }
.frow b { font-weight: 400; width: 240px; color: #fff; font-size: 11.5px; }
.frow span { width: 144px; }
.frow span + span { width: 120px; }
.frow em { font-style: normal; width: 66px; text-align: right; }
.status { height: 23px; background: #333; display: flex; align-items: center; padding-left: 14px; color: #dedede; letter-spacing: -0.1px; }
.status > i { width: 1px; height: 11px; background: #fff; margin: 0 11px 0 10px; }
.views { margin-left: auto; display: flex; align-items: center; gap: 4px; padding-right: 8px; }
.v-on { width: 22px; height: 23px; background: #636363; border: 1px solid #888; display: flex; align-items: center; justify-content: center; }

/* Taskbar */
.taskbar { height: 40px; display: flex; align-items: center; color: #f2f2f2; }
.left { background: linear-gradient(90deg, #393634 0, #3b3634 420px, #3c3735 800px, #393838 920px, #2c2e24 985px, #2a2b20 1130px, #312a20 1230px, #33302b 1300px, #2f3336 1345px, #33383b 1366px); }
.right { background: linear-gradient(90deg, #393634 0, #3b3634 420px, #3b3736 800px, #35383a 940px, #2c2e24 985px, #2a2b20 1130px, #31291f 1230px, #2f3031 1310px, #2f3336 1366px); }
.tk { width: 48px; height: 40px; display: flex; align-items: center; justify-content: center; }
.tsearch { width: 344px; height: 40px; background: #323232; border: 1px solid #5c5c5c; display: flex; align-items: center; padding-left: 11px; gap: 12px; font-size: 14px; letter-spacing: -0.1px; color: #c9c9c9; }
.apps { display: flex; gap: 1px; margin-left: 3px; }
.act { background: linear-gradient(#62605f 38px, #76b9ed 38px); }
.run { background: linear-gradient(#76b9ed, #76b9ed) 4px 38px / 40px 2px no-repeat; }
.tray { margin-left: 65px; flex: 1; height: 40px; display: flex; align-items: center; }
.temp { font-size: 14px; margin-left: 9px; width: 47px; letter-spacing: -0.5px; }
.i-db { margin-left: 10px; }
.i-od { margin-left: 8px; }
.i-wifi { margin-left: 10px; }
.i-bat { margin-left: 8px; }
.i-vol { margin-left: 7px; }
.two { display: flex; flex-direction: column; font-size: 12px; line-height: 18px; letter-spacing: -0.6px; padding-bottom: 1px; }
.lang { margin-left: 9px; width: 24px; }
.clock { width: 60px; text-align: center; margin-left: 8px; letter-spacing: -0.4px; }
.solo { margin-left: auto; margin-right: 3px; }
.note { position: relative; margin-left: 14px; width: 24px; height: 15px; margin-bottom: 3px; }
.note span { position: absolute; left: 7px; top: 7px; width: 17px; height: 17px; border-radius: 50%; border: 1px solid #999; background: #303437; font: 600 12px/15px "Open Sans", sans-serif; text-align: center; }
.peek { width: 1px; height: 40px; background: #777; margin-left: auto; margin-right: 4px; }

/* Browser */
.browser { height: 728px; display: flex; flex-direction: column; background: #fff; color: #3c4043; }
.tabstrip { height: 34px; background: #ffdc5c; display: flex; align-items: center; padding-left: 8px; }
.btab { width: 240px; height: 34px; background: #fff; border-radius: 8px 8px 0 0; display: flex; align-items: center; padding-left: 13px; font-size: 11.300px; letter-spacing: -0.1px; }
.btab span { width: 183px; margin-left: 9px; padding-bottom: 1px; }
.plus { margin-left: 16px; }
.bctl { margin-left: auto; display: flex; gap: 35px; padding: 0 19px 5px 0; align-items: center; }
.bctl svg:first-child { margin: 5px -3px 0 0; }
.toolbar { height: 36px; display: flex; align-items: center; padding-left: 14px; gap: 16px; }
.omni { width: 1022px; height: 28px; border-radius: 14px; background: #e1e1e1; margin-left: -2px; padding-left: 11px; display: flex; align-items: center; color: #202124; font-size: 13.400px; }
.omni p { margin: 0 0 0 9px; }
.omni p span { color: #5f6368; }
.o-zoom { margin-left: auto; margin-right: 18px; }
.omni svg:last-child { margin-right: 11px; }
.exts { display: flex; align-items: center; gap: 16px; margin-left: -2px; }
.exts .ava { margin: 0 3px 0 -2px; }
.bookmarks { height: 33px; border-bottom: 1px solid #a8abb0; display: flex; align-items: center; padding: 0 0 5px 15px; font-size: 11.4px; letter-spacing: -0.1px; }
.bookmarks a { display: flex; align-items: center; gap: 10px; }
.bookmarks .k-apps { width: 68px; }
.k-cg, .k-nf { width: 124px; }
.bookmarks .k-cg, .bookmarks .k-nf { gap: 9px; }
.bookmarks .k-nf { width: 97px; }
.bookmarks .k-re { width: 155px; gap: 8px; }
.bookmarks .k-gm { width: 70px; }
.bookmarks .k-yt { width: 88px; gap: 8px; }
.bookmarks .k-mp { width: 68px; gap: 12px; }
.bookmarks .k-or { width: 113px; gap: 8px; }
.bookmarks .k-ac { gap: 8px; }
.bm-r { margin-left: auto; display: flex; align-items: center; padding-right: 14px; }
.bm-r b { font-size: 15px; color: #222; margin-right: 10px; line-height: 15px; }
.bm-r i { width: 1px; height: 16px; background: #bbb; margin-right: 12px; }
.bookmarks .k-ob { width: 125px; gap: 9px; }
.bm-r .k-rl { width: 86px; gap: 7px; margin-left: -2px; }
.view-port { height: 625px; display: flex; }
.page { width: 1349px; background: #ffc107; overflow: hidden; padding: 25px 0 0 362px; }
.card { width: 625px; height: 700px; background: #fff; box-shadow: 1px 2px 4px rgba(0,0,0,.18); padding: 34px 37px 0 38px; }
h1 { margin: 0 0 29px; height: 43px; text-align: center; font: 700 31px/43px Inter, sans-serif; letter-spacing: 0.45px; color: #ffc107; }
.field { display: flex; height: 45px; margin-bottom: 19.300px; align-items: center; justify-content: space-between; font-family: Inter, sans-serif; font-size: 17.500px; font-weight: 300; letter-spacing: 0.75px; color: #666; }
.field input, .select { width: 373px; height: 45px; border: 1px solid #d5dbd9; border-radius: 3px; background: #fff; }
.select { width: 370px; display: flex; align-items: center; justify-content: space-between; padding: 0 13px; color: #111; }
.select span { font-size: 19px; font-weight: 300; letter-spacing: 0.3px; }
.select i { border: 10px solid transparent; border-top-color: #d5dbd9; border-bottom: 0; margin-bottom: 5px; }
.tall input { height: 80px; align-self: flex-start; }
.scroll { width: 17px; background: #f1f1f1; display: flex; flex-direction: column; align-items: center; padding: 7px 0; }
.scroll i { width: 13px; height: 382px; background: #c1c1c1; margin: 6px 0 auto; }
```
